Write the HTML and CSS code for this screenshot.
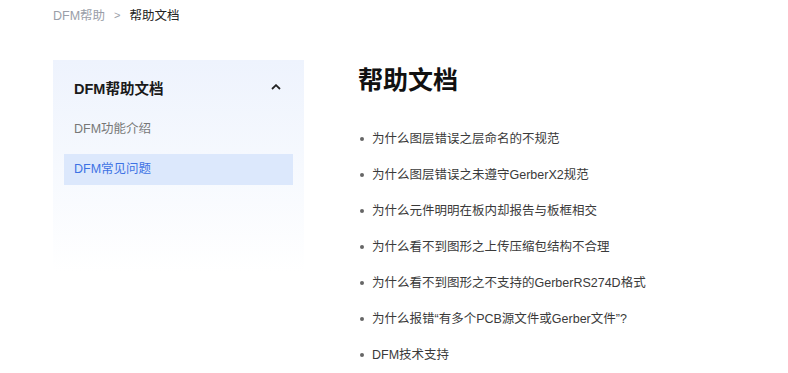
FILE: index.html
```html
<!DOCTYPE html>
<html lang="zh-CN">
<head>
    <meta charset="UTF-8"/>
    <title>DFM帮助 - 帮助文档</title>
    <link rel="stylesheet" href="styles.css">
</head>
<body>
<nav class="crumbs">
    <span class="crumb-link">DFM帮助</span>
    <span class="crumb-sep">&gt;</span>
    <span class="crumb-current">帮助文档</span>
</nav>

<div class="layout">
    <aside class="sidebar">
        <div class="side-head">
            <span>DFM帮助文档</span>
            <svg class="chevron" width="10" height="6" viewBox="0 0 10 6">
                <path d="M1 5 L5 1.2 L9 5" fill="none" stroke="#222" stroke-width="1.8"/>
            </svg>
        </div>
        <div class="side-item">DFM功能介绍</div>
        <div class="side-item active">DFM常见问题</div>
    </aside>

    <main class="content">
        <h1>帮助文档</h1>
        <ul class="faq">
            <li>为什么图层错误之层命名的不规范</li>
            <li>为什么图层错误之未遵守GerberX2规范</li>
            <li>为什么元件明明在板内却报告与板框相交</li>
            <li>为什么看不到图形之上传压缩包结构不合理</li>
            <li>为什么看不到图形之不支持的GerberRS274D格式</li>
            <li>为什么报错“有多个PCB源文件或Gerber文件”?</li>
            <li>DFM技术支持</li>
        </ul>
    </main>
</div>
</body>
</html>
```

FILE: styles.css
```css
html, body {
    margin: 0;
    padding: 0;
    background: #fff;
}

body {
    font-family: "Liberation Sans", "Noto Sans CJK SC", sans-serif;
    color: #333;
}

.crumbs {
    display: flex;
    align-items: center;
    gap: 9px;
    padding: 5px 0 0 53px;
    height: 19px;
    font-size: 12.5px;
}

.crumb-link {
    color: #9a9ea8;
}

.crumb-sep {
    color: #9a9ea8;
    font-size: 11px;
}

.crumb-current {
    color: #222;
}

.layout {
    display: flex;
    gap: 54px;
    padding: 36px 0 0 53px;
}

.sidebar {
    width: 251px;
    height: 212px;
    box-sizing: border-box;
    padding: 14px 11px 0;
    background: linear-gradient(to bottom, #eef3fd 0%, #f6f9fe 50%, #ffffff 100%);
}

.side-head {
    display: flex;
    justify-content: space-between;
    align-items: center;
    padding: 0 11px 0 10px;
    height: 26px;
    font-size: 14.5px;
    font-weight: bold;
    color: #1a1a1a;
}

.chevron {
    margin-right: 1px;
}

.side-item {
    height: 31px;
    line-height: 31px;
    padding-left: 10px;
    margin-top: 9px;
    font-size: 12.5px;
    color: #777;
}

.side-head + .side-item {
    margin-top: 14px;
}

.side-item.active {
    background: #dce8fc;
    color: #3d72e4;
}

.content {
    flex: 1;
}

h1 {
    margin: 0;
    padding-top: 3px;
    font-size: 25px;
    line-height: 34px;
    font-weight: bold;
    color: #111;
}

.faq {
    margin: 24px 0 0;
    padding: 0 0 0 14px;
    list-style: none;
}

.faq li {
    position: relative;
    height: 36px;
    line-height: 36px;
    font-size: 12.5px;
    color: #3a3a3a;
}

.faq li::before {
    content: "";
    position: absolute;
    left: -12px;
    top: 16px;
    width: 4px;
    height: 4px;
    border-radius: 50%;
    background: #666;
}
```
